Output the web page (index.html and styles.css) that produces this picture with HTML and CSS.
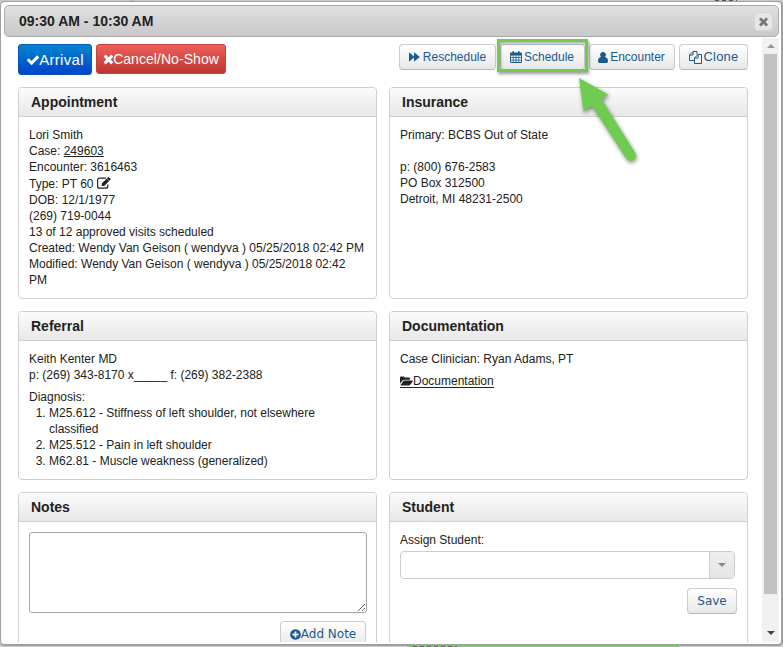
FILE: index.html
```html
<!DOCTYPE html>
<html lang="en">
<head>
<meta charset="utf-8">
<title>Appointment</title>
<link rel="stylesheet" href="styles.css">
</head>
<body>
<div class="behind-top"></div>
<div class="dialog">
  <div class="titlebar">
    <span class="title">09:30 AM - 10:30 AM</span>
    <span class="close"><svg width="13" height="13" viewBox="0 0 1792 1792"><path d="M1490 1322q0 40-28 68l-136 136q-28 28-68 28t-68-28l-294-294-294 294q-28 28-68 28t-68-28l-136-136q-28-28-28-68t28-68l294-294-294-294q-28-28-28-68t28-68l136-136q28-28 68-28t68 28l294 294 294-294q28-28 68-28t68 28l136 136q28 28 28 68t-28 68l-294 294 294 294q28 28 28 68z"/></svg></span>
  </div>
  <div class="view">
    <div class="content">
      <div class="toolbar">
        <span class="big arrival"><svg width="14" height="14" viewBox="0 0 1792 1792"><path d="M1671 566q0 40-28 68l-724 724-136 136q-28 28-68 28t-68-28l-136-136-362-362q-28-28-28-68t28-68l136-136q28-28 68-28t68 28l294 295 656-657q28-28 68-28t68 28l136 136q28 28 28 68z"/></svg><b class="t-arrival">Arrival</b></span>
        <span class="big cancel"><svg width="11" height="14" viewBox="200 0 1400 1792"><path d="M1490 1322q0 40-28 68l-136 136q-28 28-68 28t-68-28l-294-294-294 294q-28 28-68 28t-68-28l-136-136q-28-28-28-68t28-68l294-294-294-294q-28-28-28-68t28-68l136-136q28-28 68-28t68 28l294 294 294-294q28-28 68-28t68 28l136 136q28 28 28 68t-28 68l-294 294 294 294q28 28 28 68z"/></svg><b class="t-cancel">Cancel/No-Show</b></span>
        <span class="spacer"></span>
        <span class="btn resched"><svg width="11" height="10" viewBox="0 0 11 10"><path d="M0 .3 5 4.6V.3L10.8 5 5 9.7V5.4L0 9.7z"/></svg><b>Reschedule</b></span>
        <span class="btn sched"><svg width="12" height="12" viewBox="0 0 12 12"><path fill-rule="evenodd" d="M1 1.6h1.4V.7q0-.7.8-.7T4 .7v.9h4V.7q0-.7.8-.7t.8.7v.9H11q1 0 1 1V11q0 1-1 1H1q-1 0-1-1V2.600q0-1 1-1zM.9 4.500v1.700h1.900V4.500zm2.600 0v1.700h2.100V4.500zm2.900 0v1.700h2.100V4.500zm2.800 0v1.700h1.900V4.500zM.9 6.900v1.800h1.900V6.900zm2.600 0v1.800h2.100V6.900zm2.900 0v1.800h2.100V6.900zm2.800 0v1.800h1.900V6.900zM.9 9.400v1.700h1.900V9.400zm2.600 0v1.700h2.100V9.400zm2.900 0v1.700h2.100V9.400zm2.800 0v1.700h1.900V9.400z"/></svg><b>Schedule</b></span>
        <span class="btn enc"><svg width="10" height="11" viewBox="0 0 10 11"><path d="M5 0a2.700 2.800 0 0 1 1.900 4.900Q10 5.400 10 9.200 10 11 8.400 11H1.600Q0 11 0 9.200 0 5.400 3.100 4.900A2.700 2.800 0 0 1 5 0z"/></svg><b>Encounter</b></span>
        <span class="btn clone"><svg width="13" height="13" viewBox="0 0 13 13"><g fill="none" stroke="#1b5a8e" stroke-width="1"><path d="M5 9.500H.5V4L4 .5h4v3M4 .5V4H.5M5.500 7 9 3.500h3.500v9h-7zM9 3.500V7H5.500"/></g></svg><b>Clone</b></span>
      </div>
      <div class="grid">
        <div class="panel">
          <h2>Appointment</h2>
          <div class="body">
            <div>Lori Smith</div>
            <div>Case: <u>249603</u></div>
            <div>Encounter: 3616463</div>
            <div class="type">Type: PT 60 <svg width="14" height="12" viewBox="0 0 14 12"><path fill="none" stroke="#222" stroke-width="1.200" d="M9 1.100H2.600Q.6 1.100.6 3v6.200q0 2 2 2h6.200q2 0 2-2V7.600"/><path fill="#222" d="M4.800 9V6.500L10.900.4q.6-.6 1.200 0l1.200 1.200q.6.6 0 1.200L7.200 9z"/><path stroke="#fff" stroke-width=".5" d="M9.900 1.600l2.300 2.300"/></svg></div>
            <div>DOB: 12/1/1977</div>
            <div>(269) 719-0044</div>
            <div>13 of 12 approved visits scheduled</div>
            <div>Created: Wendy Van Geison ( wendyva ) 05/25/2018 02:42 PM</div>
            <div>Modified: Wendy Van Geison ( wendyva ) 05/25/2018 02:42 PM</div>
          </div>
        </div>
        <div class="panel">
          <h2>Insurance</h2>
          <div class="body">
            <div>Primary: BCBS Out of State</div>
            <div class="contact">p: (800) 676-2583</div>
            <div>PO Box 312500</div>
            <div>Detroit, MI 48231-2500</div>
          </div>
        </div>
        <div class="panel">
          <h2>Referral</h2>
          <div class="body">
            <div>Keith Kenter MD</div>
            <div>p: (269) 343-8170 x_____ f: (269) 382-2388</div>
            <div class="diag">Diagnosis:</div>
            <ol>
              <li>M25.612 - Stiffness of left shoulder, not elsewhere classified</li>
              <li>M25.512 - Pain in left shoulder</li>
              <li>M62.81 - Muscle weakness (generalized)</li>
            </ol>
          </div>
        </div>
        <div class="panel">
          <h2>Documentation</h2>
          <div class="body">
            <div>Case Clinician: Ryan Adams, PT</div>
            <div class="doc"><svg width="13" height="10" viewBox="0 0 13 10"><path d="M0 7.600V1.500Q0 .5 1 .5h2.500q1 0 1 1h4.500q1 0 1 1v1.200H4.200q-1 0-1.700.8zM.4 9.300 3 5.400q.5-.8 1.400-.8h7.800q1 0 .5.800L10.300 8.800q-.5.700-1.400.7H.8q-.4 0-.4-.2z"/></svg>Documentation</div>
          </div>
        </div>
        <div class="panel">
          <h2>Notes</h2>
          <div class="body notes">
            <textarea></textarea>
            <span class="btn add"><svg width="11" height="11" viewBox="100 100 1592 1592"><path d="M1344 960v-128q0-26-19-45t-45-19h-256v-256q0-26-19-45t-45-19h-128q-26 0-45 19t-19 45v256h-256q-26 0-45 19t-19 45v128q0 26 19 45t45 19h256v256q0 26 19 45t45 19h128q26 0 45-19t19-45v-256h256q26 0 45-19t19-45zm320-64q0 209-103 385.500t-279.500 279.500-385.500 103-385.500-103-279.500-279.500-103-385.500 103-385.500 279.500-279.500 385.500-103 385.500 103 279.500 279.500 103 385.500z"/></svg><b>Add Note</b></span>
          </div>
        </div>
        <div class="panel">
          <h2>Student</h2>
          <div class="body student">
            <div>Assign Student:</div>
            <div class="combo"><span class="field"></span><span class="drop"><i class="down"></i></span></div>
            <span class="btn save"><b>Save</b></span>
          </div>
        </div>
      </div>
    </div>
    <div class="scroll"><i class="up"></i><span class="thumb"></span><span class="rest"></span><i class="down dark"></i></div>
  </div>
</div>
<div class="behind-bottom"><span class="event"></span></div>
<div class="highlight"></div>
<svg class="arrow" width="70" height="100" viewBox="570 70 70 100"><path fill="#70cc50" d="M579 78 608.500 94.500 601.500 99 635 152.500A5 5 0 0 1 626 158.300L592 106 583.500 111.500z"/></svg>
</body>
</html>
```

FILE: styles.css
```css
* { box-sizing: border-box; }
body {
  margin: 0;
  width: 783px;
  height: 647px;
  overflow: hidden;
  background: #c4c4c4;
  font: 12px/16px "Liberation Sans", Arial, sans-serif;
  color: #222;
  position: relative;
}
b { font-weight: normal; }
svg { flex: none; fill: currentColor; }
.behind-top {
  height: 1px;
  background:
    repeating-linear-gradient(90deg, #555 0 4px, transparent 4px 7px) 715px 0 / 22px 1px no-repeat,
    linear-gradient(#999, #999) 131px 0 / 1px 1px no-repeat,
    #c9c9c9;
}
.dialog {
  height: 645px;
  border: 1px solid #a0a0a0;
  border-width: 1px 2px 2px 1px;
  border-radius: 5px;
  background: #fff;
  padding: 3px 2px 2px 3px;
}
.titlebar {
  height: 32px;
  border: 1px solid #aaa;
  border-radius: 5px;
  background: linear-gradient(#e0e0e0, #c9c9c9);
  display: flex;
  align-items: center;
  justify-content: space-between;
  padding: 0 5px 0 14px;
}
.title { font-weight: bold; font-size: 14px; white-space: nowrap; }
.close {
  width: 19px;
  height: 19px;
  border: 1px solid #d3d3d3;
  border-radius: 4px;
  background: #e6e6e6;
  color: #777;
  display: flex;
  align-items: center;
  justify-content: center;
}
.view { display: flex; height: 604px; margin-top: 1px; overflow: hidden; }
.content { width: 758px; padding: 6px 14px 0; flex: none; overflow: hidden; }
.toolbar { display: flex; align-items: flex-start; height: 43px; width: 730px; }
.spacer { flex: 1; }
.big {
  display: flex;
  align-items: center;
  justify-content: center;
  color: #fff;
  border-radius: 3px;
  height: 31px;
  font-size: 14px;
  white-space: nowrap;
}
.arrival { width: 74px; margin-right: 4px; background: linear-gradient(#0087cc, #0044cc); border: 1px solid #0658b8; }
.t-arrival { font-size: 15px; letter-spacing: .3px; margin-left: -1px; }
.cancel { width: 130px; height: 30px; background: linear-gradient(#ee5f5b, #bd362f); border: 1px solid #c5413d; }
.t-cancel { margin-left: -1px; letter-spacing: .05px; }
.btn {
  display: flex;
  align-items: center;
  justify-content: center;
  height: 26px;
  border: 1px solid #ccc;
  border-bottom-color: #b5b5b5;
  border-radius: 4px;
  background: linear-gradient(#fff, #e8e8e8);
  color: #1b5a8e;
  white-space: nowrap;
  gap: 3px;
}
.toolbar .btn { font-size: 12px; }
.resched { width: 97px; margin-right: 4px; }
.sched { width: 85px; margin-right: 4px; }
.enc { width: 86px; margin-right: 4px; }
.toolbar .sched, .toolbar .enc { gap: 2px; padding-right: 1px; }
.toolbar .clone { width: 69px; font-size: 13px; gap: 2px; letter-spacing: .2px; }
.grid {
  display: grid;
  grid-template-columns: 359px 359px;
  grid-template-rows: 212px 169px 200px;
  gap: 12px;
}
.panel { border: 1px solid #d0d0d0; border-radius: 4px; overflow: hidden; }
h2 {
  margin: 0;
  height: 29px;
  border-bottom: 1px solid #d0d0d0;
  background: linear-gradient(#fbfbfb, #e8e8e8);
  font: bold 14px/28px "Liberation Sans", Arial, sans-serif;
  padding-left: 12px;
}
.body { padding: 10px; }
.type { height: 17px; line-height: 18px; }
.type svg { vertical-align: -1px; }
.contact { margin-top: 16px; }
.diag { margin-top: 6px; }
ol { margin: 0; padding: 0 30px 0 20px; }
.doc { display: inline-flex; align-items: center; margin-top: 7px; height: 14px; border-bottom: 1px solid #222; }
.notes, .student { display: flex; flex-direction: column; }
textarea {
  width: 338px;
  height: 81px;
  border: 1px solid #a5a5a5;
  border-radius: 3px;
  background: #fff;
  margin: 0 0 8px;
  display: block;
}
.add, .save { font: 12px "DejaVu Sans", Verdana, sans-serif; }
.add { width: 86px; align-self: flex-end; gap: 0; }
.save { width: 50px; align-self: flex-end; }
.combo { display: flex; width: 335px; height: 28px; margin: 3px 0 9px; border: 1px solid #ccc; border-radius: 4px; overflow: hidden; }
.field { flex: 1; }
.drop { width: 25px; border-left: 1px solid #ccc; background: linear-gradient(#efefef, #e4e4e4); display: flex; align-items: center; justify-content: center; }
.down { border: 4px solid transparent; border-top-color: #888; border-bottom: 0; }
.up { border: 4px solid transparent; border-bottom-color: #999; border-top: 0; margin: 6px 0; }
.dark { border-top-color: #444; margin-bottom: 7px; }
.scroll { width: 17px; background: #f1f1f1; display: flex; flex-direction: column; align-items: center; }
.thumb { width: 13px; height: 540px; background: #c1c1c1; }
.rest { flex: 1; }
.behind-bottom { height: 1px; padding-left: 407px; background: #ccc; }
.event {
  display: block;
  width: 272px;
  height: 1px;
  background: repeating-linear-gradient(90deg, #546b50 0 4px, transparent 4px 7px) 6px 0 / 44px 1px no-repeat, #83cc70;
}
.highlight {
  position: absolute;
  left: 497px;
  top: 39px;
  width: 91px;
  height: 33px;
  border: 3px solid #70cc50;
  box-shadow: 1px 2px 3px rgba(0,0,0,.4), inset 1px 2px 3px rgba(0,0,0,.3);
}
.arrow { position: absolute; left: 570px; top: 70px; filter: drop-shadow(1px 2px 2px rgba(0,0,0,.45)); }
```
